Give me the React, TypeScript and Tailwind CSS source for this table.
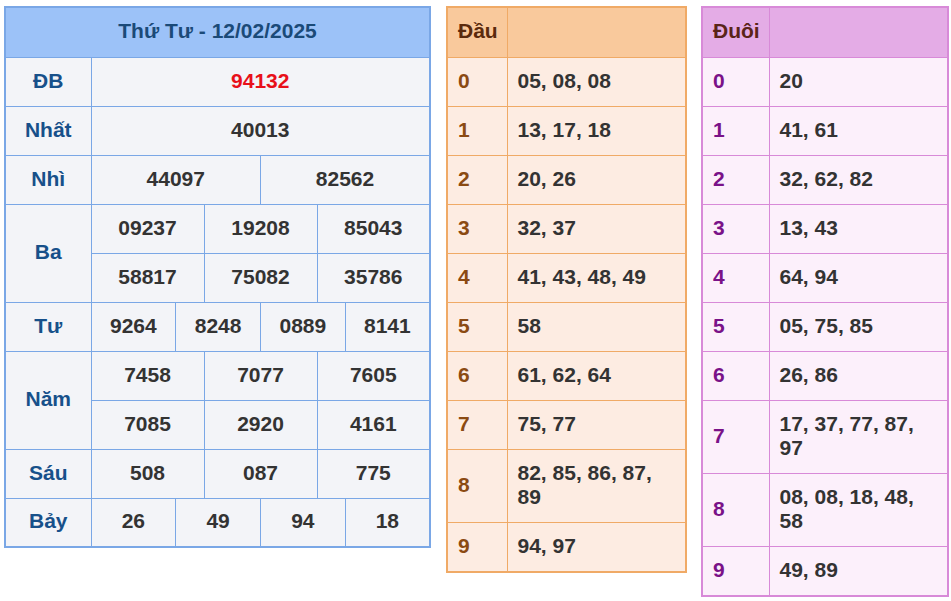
import React from 'react';

const font = "font-['Liberation_Sans',Arial,sans-serif]";

type Prize = { label: string; rows: string[][] };

const prizes: Prize[] = [
  { label: 'ĐB', rows: [['94132']] },
  { label: 'Nhất', rows: [['40013']] },
  { label: 'Nhì', rows: [['44097', '82562']] },
  { label: 'Ba', rows: [['09237', '19208', '85043'], ['58817', '75082', '35786']] },
  { label: 'Tư', rows: [['9264', '8248', '0889', '8141']] },
  { label: 'Năm', rows: [['7458', '7077', '7605'], ['7085', '2920', '4161']] },
  { label: 'Sáu', rows: [['508', '087', '775']] },
  { label: 'Bảy', rows: [['26', '49', '94', '18']] },
];

const dau = [
  '05, 08, 08',
  '13, 17, 18',
  '20, 26',
  '32, 37',
  '41, 43, 48, 49',
  '58',
  '61, 62, 64',
  '75, 77',
  '82, 85, 86, 87, 89',
  '94, 97',
];

const duoi = [
  '20',
  '41, 61',
  '32, 62, 82',
  '13, 43',
  '64, 94',
  '05, 75, 85',
  '26, 86',
  '17, 37, 77, 87, 97',
  '08, 08, 18, 48, 58',
  '49, 89',
];

function ResultTable() {
  return (
    <table className="w-[427px] table-fixed border-collapse border-2 border-[#7aa7e6] bg-[#f3f4f8] text-[21px] font-bold leading-[24px]">
      <colgroup>
        <col className="w-[86px]" />
        {Array.from({ length: 12 }).map((_, i) => (
          <col key={i} />
        ))}
      </colgroup>
      <thead>
        <tr className="h-[50px]">
          <th colSpan={13} className="border border-[#7aa7e6] bg-[#9cc2f8] pb-[2px] text-center text-[#1b4a78]">
            Thứ Tư - 12/02/2025
          </th>
        </tr>
      </thead>
      <tbody>
        {prizes.map((p) =>
          p.rows.map((row, ri) => (
            <tr key={p.label + ri} className="h-[49px]">
              {ri === 0 && (
                <td rowSpan={p.rows.length} className="border border-[#7aa7e6] pb-[2px] text-center text-[#17508a]">
                  {p.label}
                </td>
              )}
              {row.map((n, ni) => (
                <td
                  key={ni}
                  colSpan={12 / row.length}
                  className={`border border-[#7aa7e6] pb-[2px] text-center ${p.label === 'ĐB' ? 'text-[#e8101a]' : 'text-[#333333]'}`}
                >
                  {n}
                </td>
              ))}
            </tr>
          ))
        )}
      </tbody>
    </table>
  );
}

type LotoProps = {
  title: string;
  items: string[];
  width: string;
  firstCol: string;
  border: string;
  head: string;
  body: string;
  titleColor: string;
  keyColor: string;
};

function LotoTable({ title, items, width, firstCol, border, head, body, titleColor, keyColor }: LotoProps) {
  return (
    <table className={`${width} table-fixed border-collapse border-2 ${border} ${body} text-[21px] font-bold leading-[24px]`}>
      <colgroup>
        <col className={firstCol} />
        <col />
      </colgroup>
      <thead>
        <tr className={`h-[50px] ${head}`}>
          <th className={`border ${border} pl-[10px] pb-[2px] text-left ${titleColor}`}>{title}</th>
          <th className={`border ${border}`}></th>
        </tr>
      </thead>
      <tbody>
        {items.map((v, i) => (
          <tr key={i} className="h-[49px]">
            <td className={`border ${border} pl-[10px] pb-[2px] ${keyColor}`}>{i}</td>
            <td className={`border ${border} pl-[10px] pr-2 pt-[11px] pb-[13px] text-[#333333]`}>{v}</td>
          </tr>
        ))}
      </tbody>
    </table>
  );
}

export default function App() {
  return (
    <div className={`${font} flex items-start bg-white pl-[4px] pt-[6px] w-[951px] h-[601px]`}>
      <ResultTable />
      <div className="ml-[15px]">
        <LotoTable
          title="Đầu"
          items={dau}
          width="w-[241px]"
          firstCol="w-[60px]"
          border="border-[#f0aa66]"
          head="bg-[#f9c99c]"
          body="bg-[#fdece2]"
          titleColor="text-[#5b2a0c]"
          keyColor="text-[#8b4a12]"
        />
      </div>
      <div className="ml-[14px]">
        <LotoTable
          title="Đuôi"
          items={duoi}
          width="w-[248px]"
          firstCol="w-[67px]"
          border="border-[#d88ad8]"
          head="bg-[#e4ace6]"
          body="bg-[#fcf0fb]"
          titleColor="text-[#5a2418]"
          keyColor="text-[#7a1288]"
        />
      </div>
    </div>
  );
}
